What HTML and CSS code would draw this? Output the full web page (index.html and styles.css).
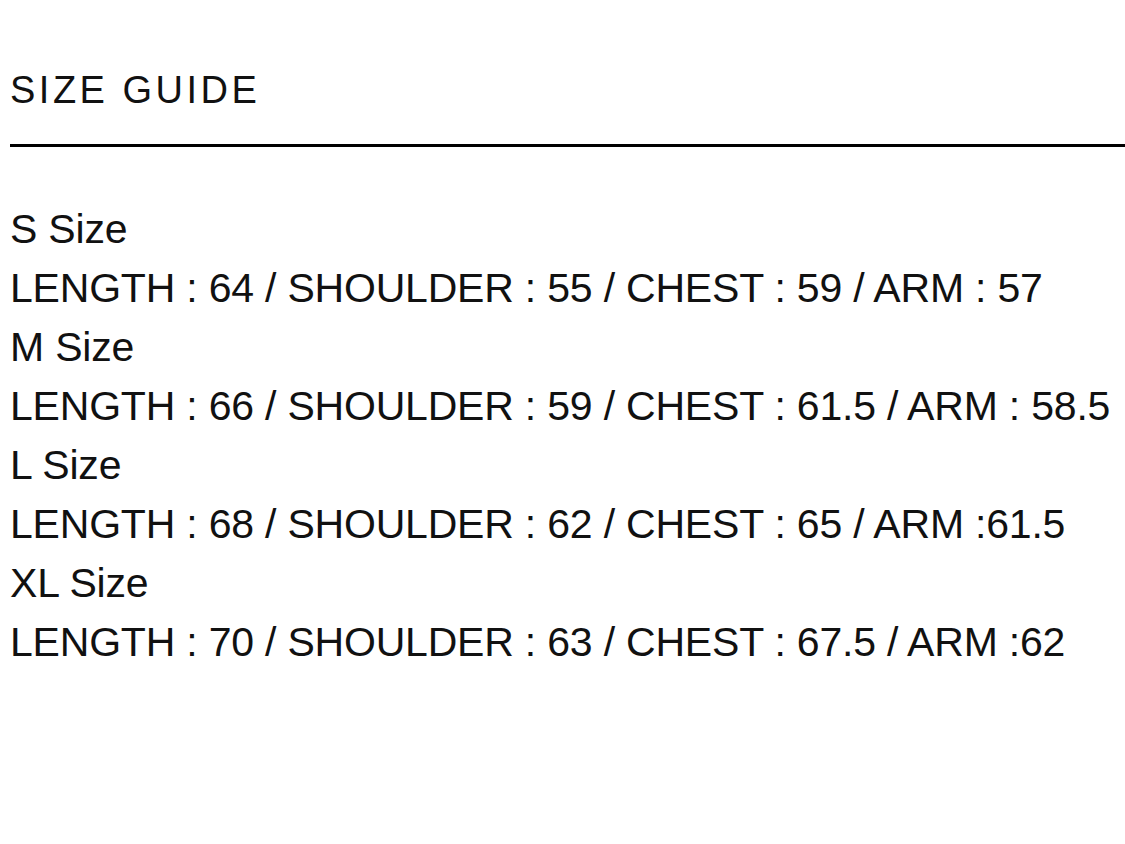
FILE: index.html
```html
<!DOCTYPE html>
<html>
<head>
<meta charset="utf-8">
<link rel="stylesheet" href="styles.css">
</head>
<body>
<div class="guide">
  <h1 class="guide-title">SIZE GUIDE</h1>
  <div class="guide-rule"></div>
  <div class="guide-body">
    <p class="row">S Size</p>
    <p class="row">LENGTH : 64 / SHOULDER : 55 / CHEST : 59 / ARM : 57</p>
    <p class="row">M Size</p>
    <p class="row">LENGTH : 66 / SHOULDER : 59 / CHEST : 61.5 / ARM : 58.5</p>
    <p class="row">L Size</p>
    <p class="row">LENGTH : 68 / SHOULDER : 62 / CHEST : 65 / ARM :61.5</p>
    <p class="row">XL Size</p>
    <p class="row">LENGTH : 70 / SHOULDER : 63 / CHEST : 67.5 / ARM :62</p>
  </div>
</div>
</body>
</html>
```
FILE: styles.css
```css
html, body {
  margin: 0;
  padding: 0;
  background: #fff;
}
body {
  width: 1125px;
  height: 844px;
  overflow: hidden;
  font-family: "Liberation Sans", Arial, sans-serif;
  color: #111;
}
.guide {
  padding: 66px 0 0 10px;
}
.guide-title {
  margin: 0;
  font-family: "Liberation Sans", Arial, sans-serif;
  font-weight: 400;
  font-size: 38px;
  line-height: 48px;
  letter-spacing: 3.5px;
}
.guide-rule {
  margin-top: 30px;
  height: 3px;
  background: #000;
}
.guide-body {
  padding-top: 53px;
}
.row {
  margin: 0;
  font-size: 41px;
  line-height: 59px;
  letter-spacing: -0.2px;
}
```
